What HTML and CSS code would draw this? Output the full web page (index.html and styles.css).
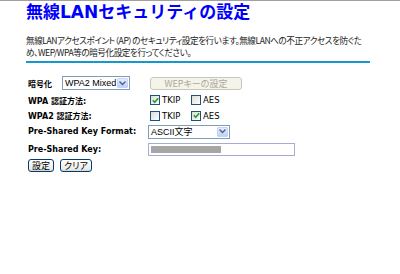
FILE: index.html
```html
<!DOCTYPE html>
<html lang="ja">
<head>
<meta charset="utf-8">
<link rel="stylesheet" href="styles.css">
</head>
<body>
<div class="page">
  <h1 class="title">無線LANセキュリティの設定</h1>
  <p class="desc">無線LANアクセスポイント（AP）のセキュリティ設定を行います。無線LANへの不正アクセスを防ぐた<br>め、WEP/WPA等の暗号化設定を行ってください。</p>
  <div class="rule"></div>
  <div class="form">
    <div class="cell first">
      <span class="lbl">暗号化</span>
      <span class="select sel1"><span class="val">WPA2 Mixed</span><span class="arrow"><svg width="7" height="5" viewBox="0 0 7 5"><path d="M0.5 0.5 L3.5 3.5 L6.5 0.5" fill="none" stroke="#4d6185" stroke-width="1.4"/></svg></span></span>
    </div>
    <div class="cell"><span class="btn disabled">WEPキーの設定</span></div>

    <div class="cell"><span class="lbl">WPA 認証方法:</span></div>
    <div class="cell checks">
      <span class="chk on"><svg width="7" height="7" viewBox="0 0 7 7"><path d="M0.8 3.3 L2.7 5.3 L6.2 1.2" fill="none" stroke="#21a121" stroke-width="1.6"/></svg></span><span class="ct">TKIP</span>
      <span class="chk"></span><span class="ct">AES</span>
    </div>

    <div class="cell"><span class="lbl">WPA2 認証方法:</span></div>
    <div class="cell checks">
      <span class="chk"></span><span class="ct">TKIP</span>
      <span class="chk on"><svg width="7" height="7" viewBox="0 0 7 7"><path d="M0.8 3.3 L2.7 5.3 L6.2 1.2" fill="none" stroke="#21a121" stroke-width="1.6"/></svg></span><span class="ct">AES</span>
    </div>

    <div class="cell"><span class="lbl">Pre-Shared Key Format:</span></div>
    <div class="cell">
      <span class="select sel2"><span class="val">ASCII文字</span><span class="arrow"><svg width="7" height="5" viewBox="0 0 7 5"><path d="M0.5 0.5 L3.5 3.5 L6.5 0.5" fill="none" stroke="#4d6185" stroke-width="1.4"/></svg></span></span>
    </div>

    <div class="cell"><span class="lbl">Pre-Shared Key:</span></div>
    <div class="cell">
      <span class="input"><span class="mask"></span></span>
    </div>
  </div>
  <div class="actions">
    <span class="btn">設定</span>
    <span class="btn">クリア</span>
  </div>
</div>
</body>
</html>
```
FILE: styles.css
```css
html, body {
  margin: 0;
  padding: 0;
  background: #fff;
}
body {
  border-top: 1px solid #a0a0a0;
  font-family: "DejaVu Sans", "Noto Sans CJK JP", sans-serif;
  color: #000;
}
.page {
  padding: 1px 0 0 26px;
  width: 346px;
}
.title {
  margin: 0;
  font-family: "DejaVu Sans", "Noto Sans CJK JP", sans-serif;
  font-size: 17px;
  line-height: 20px;
  font-weight: bold;
  color: #0000fa;
}
.desc {
  margin: 12px 0 0 0;
  font-family: "Noto Sans CJK JP", sans-serif;
  font-feature-settings: "palt";
  font-size: 8.6px;
  letter-spacing: -0.45px;
  line-height: 12px;
  white-space: nowrap;
  color: #222;
}
.rule {
  margin-top: 3px;
  height: 2px;
  background: #1598d2;
  width: 344px;
}
.form {
  margin-top: 11px;
  display: grid;
  grid-template-columns: 122px auto;
  grid-template-rows: 18px 16px 15px 17px 18px;
  align-items: center;
}
.cell {
  display: flex;
  align-items: center;
}
.lbl {
  font-family: "DejaVu Sans", "Noto Sans CJK JP", sans-serif;
  font-weight: bold;
  font-size: 8px;
  padding-left: 2px;
  color: #000;
  white-space: nowrap;
}
.first .lbl { margin-right: 10px; }
.select {
  display: inline-flex;
  align-items: center;
  justify-content: space-between;
  height: 14px;
  box-sizing: border-box;
  border: 1px solid #7f9db9;
  background: #fff;
  font-family: "Liberation Sans", "Noto Sans CJK JP", sans-serif;
  font-size: 9px;
  white-space: nowrap;
  padding-right: 1px;
}
.select .val { padding-left: 2px; }
.sel1 { width: 68px; }
.sel2 { width: 82px; }
.arrow {
  width: 11px;
  height: 10px;
  box-sizing: border-box;
  border: 1px solid #c3d3fd;
  border-radius: 1px;
  background: linear-gradient(#e6eefc, #bdd0f8);
  display: flex;
  align-items: center;
  justify-content: center;
}
.btn {
  display: inline-flex;
  align-items: center;
  justify-content: center;
  height: 13px;
  box-sizing: border-box;
  padding: 0 3px;
  border: 1px solid #003c74;
  border-radius: 3px;
  background: linear-gradient(#fff, #ecebe6 85%, #d6d0c5);
  font-family: "Noto Sans CJK JP", sans-serif;
  font-feature-settings: "palt";
  font-size: 9px;
  color: #000;
  white-space: nowrap;
}
.btn.disabled {
  width: 92px;
  border-color: #c9c7ba;
  background: #f5f4ea;
  color: #aca899;
  margin-left: 2px;
}
.chk {
  width: 10px;
  height: 10px;
  box-sizing: border-box;
  border: 1px solid #1c5180;
  background: linear-gradient(135deg, #dcdcd7, #fff);
  display: inline-flex;
  align-items: center;
  justify-content: center;
  margin-left: 2px;
}
.ct {
  font-family: "DejaVu Sans", sans-serif;
  font-size: 8.5px;
  margin-left: 2px;
  width: 27px;
}
.input {
  display: inline-flex;
  align-items: center;
  width: 147px;
  height: 13px;
  box-sizing: border-box;
  border: 1px solid #a5acd0;
  background: #fff;
  padding-left: 2px;
}
.mask {
  width: 70px;
  height: 7px;
  background: #a6a6a6;
}
.actions {
  display: flex;
  gap: 6px;
  margin-top: 1px;
  padding-left: 2px;
}
.actions .btn { height: 13px; }
```
